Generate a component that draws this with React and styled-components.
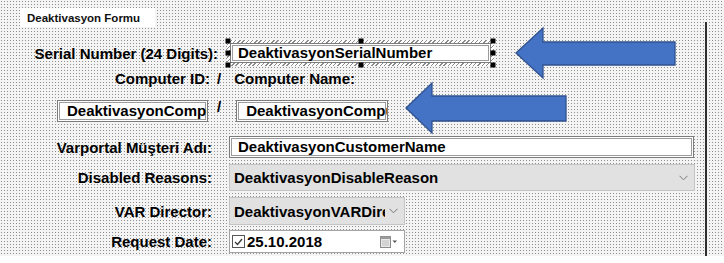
import React from 'react';
import styled, { createGlobalStyle } from 'styled-components';

const GlobalStyle = createGlobalStyle`
  html, body { margin: 0; padding: 0; background: #ffffff; }
  body { font-family: "Liberation Sans", Arial, sans-serif; }
`;

// --- Design canvas (dotted grid of the form designer) ---
const Canvas = styled.div`
  position: relative;
  display: flex;
  width: 724px;
  height: 256px;
  background-color: #8e8e8e;
  background-image:
    linear-gradient(90deg, transparent 1px, #f4f4f4 1px),
    linear-gradient(180deg, transparent 1px, #f4f4f4 1px);
  background-size: 3px 3px;
  background-position: 1px 1px;
  overflow: hidden;
`;

const Form = styled.div`
  display: flex;
  flex-direction: column;
  width: 705px;
  flex-shrink: 0;
  border-right: 2px solid #2e2e2e;
  margin-top: 22px;
`;

const Tab = styled.div`
  align-self: flex-start;
  margin: -14px 0 0 20px;
  width: 128px;
  height: 19px;
  padding-left: 7px;
  background: #ffffff;
  font-size: 11.5px;
  font-weight: bold;
  line-height: 20px;
  color: #111;
`;

const Row = styled.div`
  display: flex;
  align-items: center;
  height: ${p => p.$h}px;
  margin-top: ${p => p.$top}px;
  padding-left: ${p => p.$pl || 0}px;
`;

const Label = styled.div`
  width: ${p => p.$w}px;
  flex-shrink: 0;
  text-align: right;
  font-size: 15px;
  font-weight: bold;
  color: #000;
  white-space: nowrap;
`;

const Plain = styled.div`
  margin-left: ${p => p.$ml}px;
  font-size: 15px;
  font-weight: bold;
  color: #000;
  white-space: nowrap;
  transform: translateY(${p => p.$dy || 0}px);
`;

const TextBox = styled.div`
  box-sizing: border-box;
  width: ${p => p.$w}px;
  height: ${p => p.$h || 22}px;
  margin-left: ${p => p.$ml || 0}px;
  flex-shrink: 0;
  padding-left: ${p => p.$pl || 8}px;
  background: #ffffff;
  border: 1px solid #7c7c7c;
  box-shadow: inset 0 0 0 1px #ffffff, inset 0 0 0 2px #9c9c9c;
  font-size: 15px;
  font-weight: bold;
  line-height: ${p => (p.$h || 22) - 2}px;
  color: #000;
  white-space: nowrap;
  overflow: hidden;
`;

const Selected = styled.div`
  position: relative;
  box-sizing: border-box;
  width: 267px;
  height: 26px;
  margin-left: 9px;
  padding: 3px;
  background: repeating-linear-gradient(135deg, #8a8a8a 0 1px, #ffffff 1px 3px);
`;

const Handle = styled.span`
  position: absolute;
  width: 5px;
  height: 5px;
  background: #000;
  left: ${p => p.$x};
  top: ${p => p.$y};
  transform: translate(-50%, -50%);
`;

const Combo = styled.div`
  box-sizing: border-box;
  display: flex;
  align-items: center;
  width: ${p => p.$w}px;
  height: ${p => p.$h}px;
  margin-left: 17px;
  padding: 0 6px 0 4px;
  background: #e1e1e1;
  border: 1px solid #c4c4c4;
  font-size: 15px;
  font-weight: bold;
  color: #000;
`;

const ComboText = styled.span`
  flex: 1;
  white-space: nowrap;
  overflow: hidden;
`;

const Chevron = () => (
  <svg width="9" height="6" viewBox="0 0 9 6" style={{ flexShrink: 0, marginLeft: 4 }}>
    <path d="M0.5 0.8 L4.5 4.8 L8.5 0.8" fill="none" stroke="#777" strokeWidth="1" />
  </svg>
);

const DateBox = styled.div`
  box-sizing: border-box;
  display: flex;
  align-items: center;
  width: 176px;
  height: 23px;
  margin-left: 17px;
  padding: 0 6px 0 2px;
  background: #ffffff;
  border: 1px solid #a4a4a4;
  font-size: 15px;
  font-weight: bold;
  color: #000;
`;

const Check = styled.span`
  box-sizing: border-box;
  display: inline-flex;
  align-items: center;
  justify-content: center;
  width: 13px;
  height: 13px;
  margin-right: 2px;
  border: 1px solid #555;
  background: #fff;
`;

const DateText = styled.span`
  flex: 1;
`;

const Arrows = styled.svg`
  position: absolute;
  left: 0;
  top: 0;
  pointer-events: none;
`;

const App = () => (
  <>
    <GlobalStyle />
    <Canvas>
      <Form>
        <Tab>Deaktivasyon Formu</Tab>

        <Row $top={13} $h={26}>
          <Label $w={218}>Serial Number (24 Digits):</Label>
          <Selected>
            <TextBox $w={261} $h={20} $pl={7}>DeaktivasyonSerialNumber</TextBox>
            <Handle $x="1px" $y="1px" />
            <Handle $x="50%" $y="1px" />
            <Handle $x="calc(100% - 1px)" $y="1px" />
            <Handle $x="1px" $y="50%" />
            <Handle $x="calc(100% - 1px)" $y="50%" />
            <Handle $x="1px" $y="calc(100% - 1px)" />
            <Handle $x="50%" $y="calc(100% - 1px)" />
            <Handle $x="calc(100% - 1px)" $y="calc(100% - 1px)" />
          </Selected>
        </Row>

        <Row $top={4} $h={17}>
          <Label $w={210}>Computer ID:</Label>
          <Plain $ml={7}>/</Plain>
          <Plain $ml={13}>Computer Name:</Plain>
        </Row>

        <Row $top={13} $h={22} $pl={57}>
          <TextBox $w={151} $pl={9}>DeaktivasyonComputerID</TextBox>
          <Plain $ml={9} $dy={-5}>/</Plain>
          <TextBox $w={152} $ml={15} $pl={9}>DeaktivasyonComputerName</TextBox>
        </Row>

        <Row $top={14} $h={22}>
          <Label $w={212}>Varportal Müşteri Adı:</Label>
          <TextBox $w={465} $ml={17}>DeaktivasyonCustomerName</TextBox>
        </Row>

        <Row $top={6} $h={27}>
          <Label $w={212}>Disabled Reasons:</Label>
          <Combo $w={466} $h={27}>
            <ComboText>DeaktivasyonDisableReason</ComboText>
            <Chevron />
          </Combo>
        </Row>

        <Row $top={6} $h={28}>
          <Label $w={212}>VAR Director:</Label>
          <Combo $w={176} $h={28}>
            <ComboText>DeaktivasyonVARDirector</ComboText>
            <Chevron />
          </Combo>
        </Row>

        <Row $top={5} $h={23}>
          <Label $w={212}>Request Date:</Label>
          <DateBox>
            <Check>
              <svg width="9" height="8" viewBox="0 0 9 8">
                <path d="M1 4 L3.5 6.5 L8 1" fill="none" stroke="#333" strokeWidth="1.2" />
              </svg>
            </Check>
            <DateText>25.10.2018</DateText>
            <svg width="18" height="12" viewBox="0 0 18 12">
              <rect x="0.5" y="0.5" width="10" height="11" fill="#e9e9e9" stroke="#8a8a8a" />
              <rect x="0.5" y="0.5" width="10" height="2.5" fill="#9a9a9a" />
              <path d="M2 5 H9 M2 7 H9 M2 9 H9" stroke="#b0b0b0" strokeWidth="0.8" />
              <path d="M12.5 4.5 L17 4.5 L14.75 7 Z" fill="#555" />
            </svg>
          </DateBox>
        </Row>
      </Form>

      <Arrows width="724" height="256" viewBox="0 0 724 256">
        <polygon
          points="516,53 543,28 543,42 675,42 675,65 543,65 543,78"
          fill="#4472C4"
          stroke="#2F528F"
          strokeWidth="1.3"
        />
        <polygon
          points="406,108 432,83 432,96 566,96 566,121 432,121 432,133"
          fill="#4472C4"
          stroke="#2F528F"
          strokeWidth="1.3"
        />
      </Arrows>
    </Canvas>
  </>
);

export default App;
